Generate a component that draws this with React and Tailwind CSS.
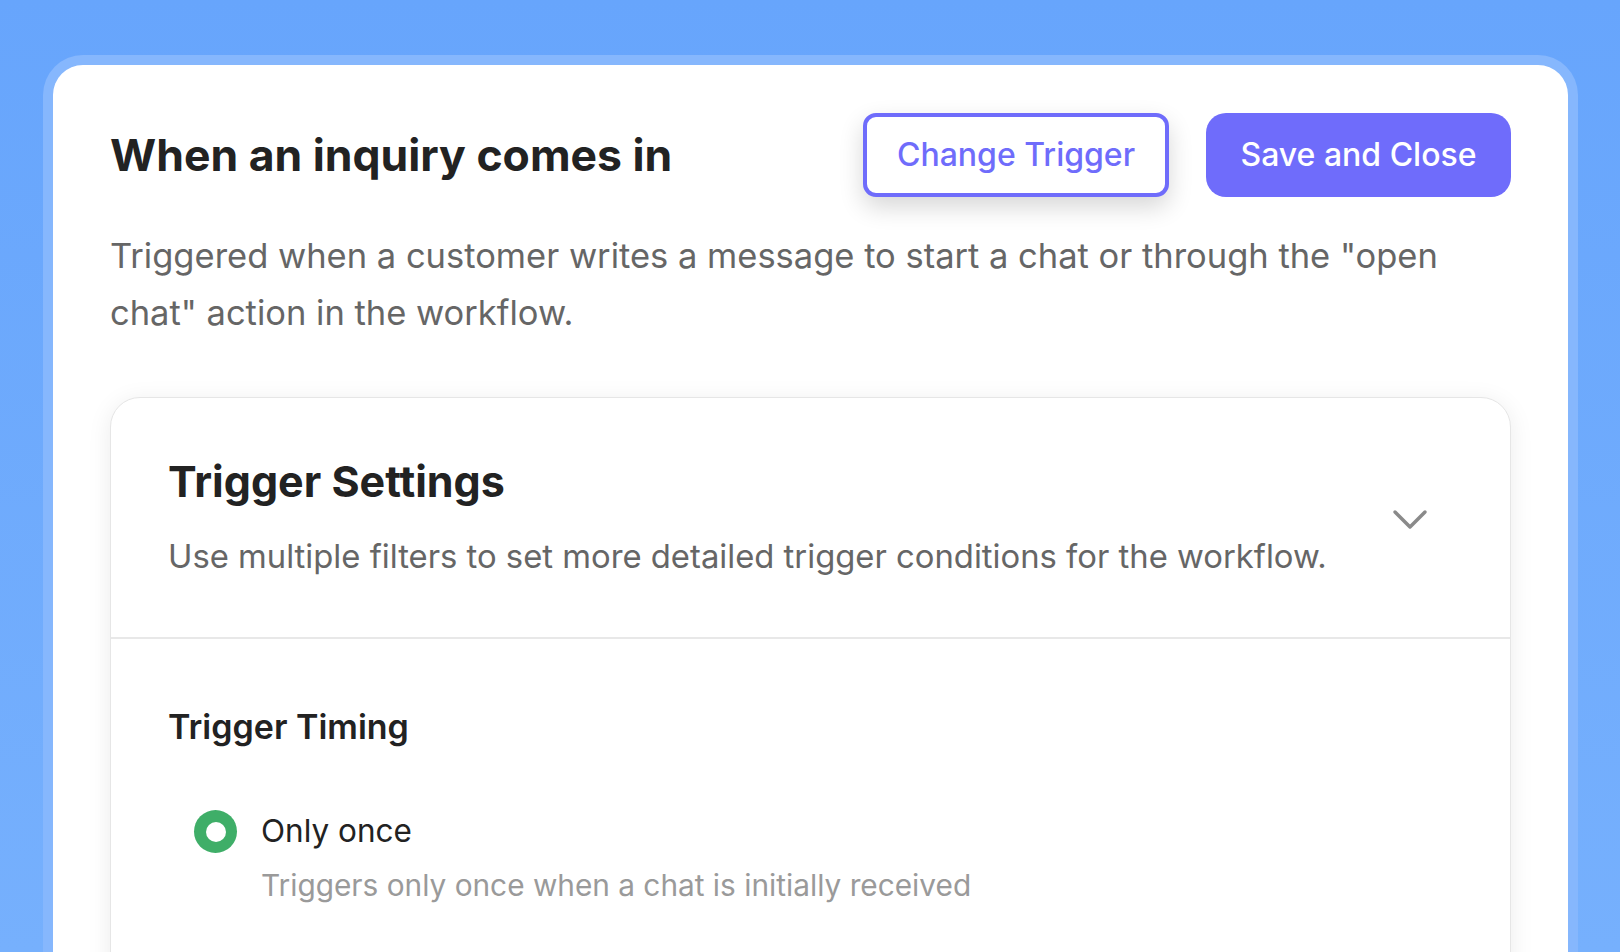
const Chevron = () => (
  <svg width="36" height="22" viewBox="0 0 36 22" fill="none" className="shrink-0 mt-[6px]">
    <polyline points="3,3 18,18 33,3" stroke="#8a8a8a" strokeWidth="3.5" strokeLinecap="round" strokeLinejoin="round" />
  </svg>
);

const App = () => {
  return (
    <div
      className="w-[1620px] h-[952px] overflow-hidden bg-gradient-to-b from-[#67a5fc] to-[#76b0fd] pl-[43px] pr-[42px] pt-[55px]"
      style={{ fontFamily: "Inter, 'Noto Sans', sans-serif" }}
    >
      {/* frame */}
      <div className="rounded-[40px] bg-[#86b7fd] p-[10px] h-[1000px]">
        <div className="rounded-[30px] bg-white h-full px-[57px] pt-[48px]">
          {/* HEADER */}
          <div className="flex items-center justify-between">
            <h1 className="text-[44.5px] font-bold text-[#222] leading-[52px]">When an inquiry comes in</h1>
            <div className="flex items-center gap-[37px]">
              <button className="w-[306px] h-[84px] rounded-[13px] border-[4px] border-[#6f6cfb] bg-white text-[32px] font-medium text-[#6f6cfb] shadow-[0_10px_24px_rgba(0,0,0,0.16)]">
                Change Trigger
              </button>
              <button className="w-[305px] h-[84px] rounded-[20px] bg-[#6f6cfb] text-[32px] font-medium text-white">
                Save and Close
              </button>
            </div>
          </div>

          {/* DESCRIPTION */}
          <p className="mt-[30px] text-[34.5px] leading-[57px] text-[#666]">
            Triggered when a customer writes a message to start a chat or through the "open chat" action in the workflow.
          </p>

          {/* SETTINGS CARD */}
          <div className="mt-[56px] rounded-[30px] border border-[#e6e6e6] bg-white shadow-[0_4px_24px_rgba(0,0,0,0.08)]">
            <div className="flex items-center justify-between pt-[57px] pb-[59px] pl-[57px] pr-[82px] border-b-2 border-[#e8e8e8]">
              <div>
                <h2 className="text-[43px] font-bold text-[#222] leading-[52px]">Trigger Settings</h2>
                <p className="mt-[27px] text-[32.8px] leading-[44px] text-[#666]">
                  Use multiple filters to set more detailed trigger conditions for the workflow.
                </p>
              </div>
              <Chevron />
            </div>
            <div className="pl-[57px] pt-[67px] pb-[200px]">
              <h3 className="text-[34px] font-semibold text-[#222] leading-[41px]">Trigger Timing</h3>
              <div className="mt-[64px] ml-[26px] flex gap-[24px]">
                <div className="-mt-[1px] w-[43px] h-[43px] rounded-full bg-[#3fae68] flex items-center justify-center shrink-0">
                  <div className="w-[20px] h-[20px] rounded-full bg-white" />
                </div>
                <div>
                  <div className="text-[31.5px] leading-[40px] text-[#222]">Only once</div>
                  <div className="mt-[15px] text-[29.8px] leading-[38px] text-[#9a9a9a]">
                    Triggers only once when a chat is initially received
                  </div>
                </div>
              </div>
            </div>
          </div>
        </div>
      </div>
    </div>
  );
};

export default App;
